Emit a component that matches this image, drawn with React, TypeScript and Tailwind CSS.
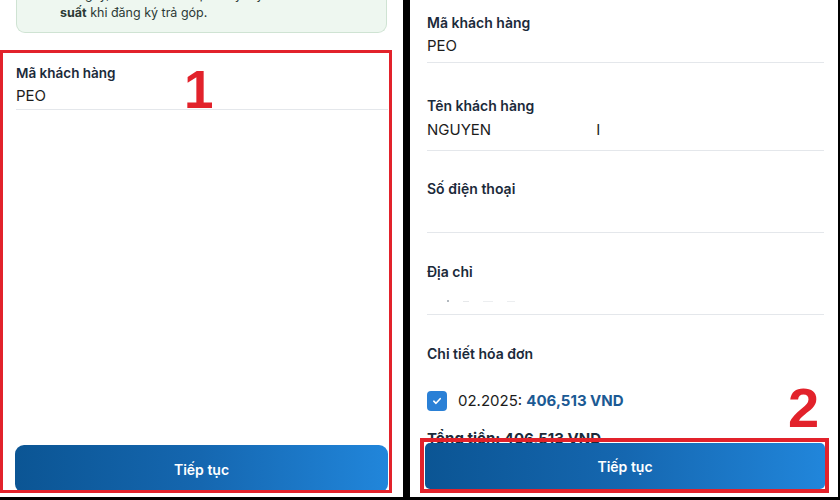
import React from "react";

const font = { fontFamily: "Inter, 'Noto Sans', sans-serif" };

function ContinueButton({ className }: { className: string }) {
  return (
    <div
      className={`flex items-center justify-center bg-gradient-to-r from-[#0b5594] via-[#1567b0] to-[#2186db] text-[14px] font-semibold text-white ${className}`}
    >
      Tiếp tục
    </div>
  );
}

function Field({
  label,
  children,
  wrap,
  valueCls,
  lineCls,
}: {
  label: string;
  children?: React.ReactNode;
  wrap: string;
  valueCls: string;
  lineCls: string;
}) {
  return (
    <div className={wrap}>
      <div className="text-[14px] font-semibold leading-[20px] text-[#1b2a3a]">{label}</div>
      <div className={`h-[20px] text-[15px] leading-[20px] text-[#1c1c1c] ${valueCls}`}>{children}</div>
      <div className={`h-px bg-[#e4e7eb] ${lineCls}`} />
    </div>
  );
}

export default function App() {
  return (
    <div className="flex h-[500px] w-[840px] overflow-hidden bg-black" style={font}>
      {/* left phone screen */}
      <div className="relative flex h-[497px] w-[403px] flex-col bg-white">
        <div className="px-[16px]">
          <div className="flex h-[33px] flex-col justify-end overflow-hidden rounded-b-[9px] border border-t-0 border-[#cfe3d3] bg-[#eef7f0] pb-[10px] pl-[43px] pr-[10px]">
            <p className="whitespace-nowrap text-[12.5px] leading-[18px] text-[#2c3a36]">
              số ngày, <b>tích điểm</b> đổi quà Loyalty và ưu đãi <b>0% lãi</b>
            </p>
            <p className="whitespace-nowrap text-[12.5px] leading-[18px] text-[#2c3a36]">
              <b>suất</b> khi đăng ký trả góp.
            </p>
          </div>
        </div>

        <div className="mt-[31px] px-[16px]">
          <div className="text-[13.5px] font-semibold leading-[18px] text-[#1b2a3a]">Mã khách hàng</div>
          <div className="mt-[4px] text-[15px] leading-[20px] text-[#1c1c1c]">PEO</div>
          <div className="mr-[-1px] mt-[3px] h-px bg-[#e4e7eb]" />
        </div>

        <div className="flex-1" />
        <ContinueButton className="mx-[15px] mb-[4px] h-[48px] rounded-[9px]" />

        {/* annotation */}
        <div className="pointer-events-none absolute left-0 top-[50px] h-[443px] w-[392px] border-[3px] border-[#e2222b]" />
        <div
          className="pointer-events-none absolute left-[184px] top-[63px] text-[53px] font-bold leading-none text-[#e2222b]"
          style={{ fontFamily: "'Liberation Sans', Arial, sans-serif" }}
        >
          1
        </div>
      </div>

      <div className="w-[7px]" />

      {/* right phone screen */}
      <div className="relative h-[497px] w-[428px] overflow-hidden bg-white pl-[17px] pr-[14px]">
        <Field label="Mã khách hàng" wrap="pt-[13px]" valueCls="mt-[3px]" lineCls="mt-[6px]">
          PEO
        </Field>
        <Field label="Tên khách hàng" wrap="mt-[33px]" valueCls="mt-[4px]" lineCls="mt-[10px]">
          NGUYEN<span className="ml-[105px]">I</span>
        </Field>
        <Field label="Số điện thoại" wrap="mt-[28px]" valueCls="mt-[3px]" lineCls="mt-[10px]" />
        <Field label="Địa chỉ" wrap="mt-[29px]" valueCls="mt-[9px] flex items-center gap-[14px] pl-[20px]" lineCls="mt-[3px]">
          <span className="h-[2px] w-[2px] rounded-full bg-[#9aa2aa]" />
          <span className="h-[1px] w-[6px] bg-[#e6e8ea]" />
          <span className="h-[1px] w-[10px] bg-[#eceef0]" />
          <span className="h-[1px] w-[8px] bg-[#eceef0]" />
        </Field>

        <div className="mt-[29px] text-[14px] font-semibold leading-[20px] text-[#1b2a3a]">Chi tiết hóa đơn</div>

        <div className="mt-[26px] flex items-center gap-[11px]">
          <div className="flex h-[20px] w-[20px] items-center justify-center rounded-[4px] bg-[#2a80d6]">
            <svg width="12" height="12" viewBox="0 0 12 12" fill="none">
              <path d="M2.8 6.2l2.2 2.1 4.2-4.6" stroke="white" strokeWidth="1.6" strokeLinecap="round" strokeLinejoin="round" />
            </svg>
          </div>
          <div className="text-[15px] leading-[22px] text-[#1c1c1c]">
            02.2025: <span className="font-bold text-[#1b5a94]">406,513 VND</span>
          </div>
        </div>

        <div className="mt-[16px] text-[15px] font-bold leading-[22px] text-[#1b2a3a]">
          Tổng tiền: 406,513 VND
        </div>

        {/* sticky footer button */}
        <ContinueButton className="absolute left-[15px] top-[443px] h-[46px] w-[400px] rounded-[5px]" />

        {/* annotation */}
        <div className="pointer-events-none absolute left-[10px] top-[438px] h-[55px] w-[409px] border-[4px] border-[#e2222b]" />
        <div
          className="pointer-events-none absolute left-[378px] top-[380px] text-[56px] font-bold leading-none text-[#e2222b]"
          style={{ fontFamily: "'Liberation Sans', Arial, sans-serif" }}
        >
          2
        </div>
      </div>
    </div>
  );
}
